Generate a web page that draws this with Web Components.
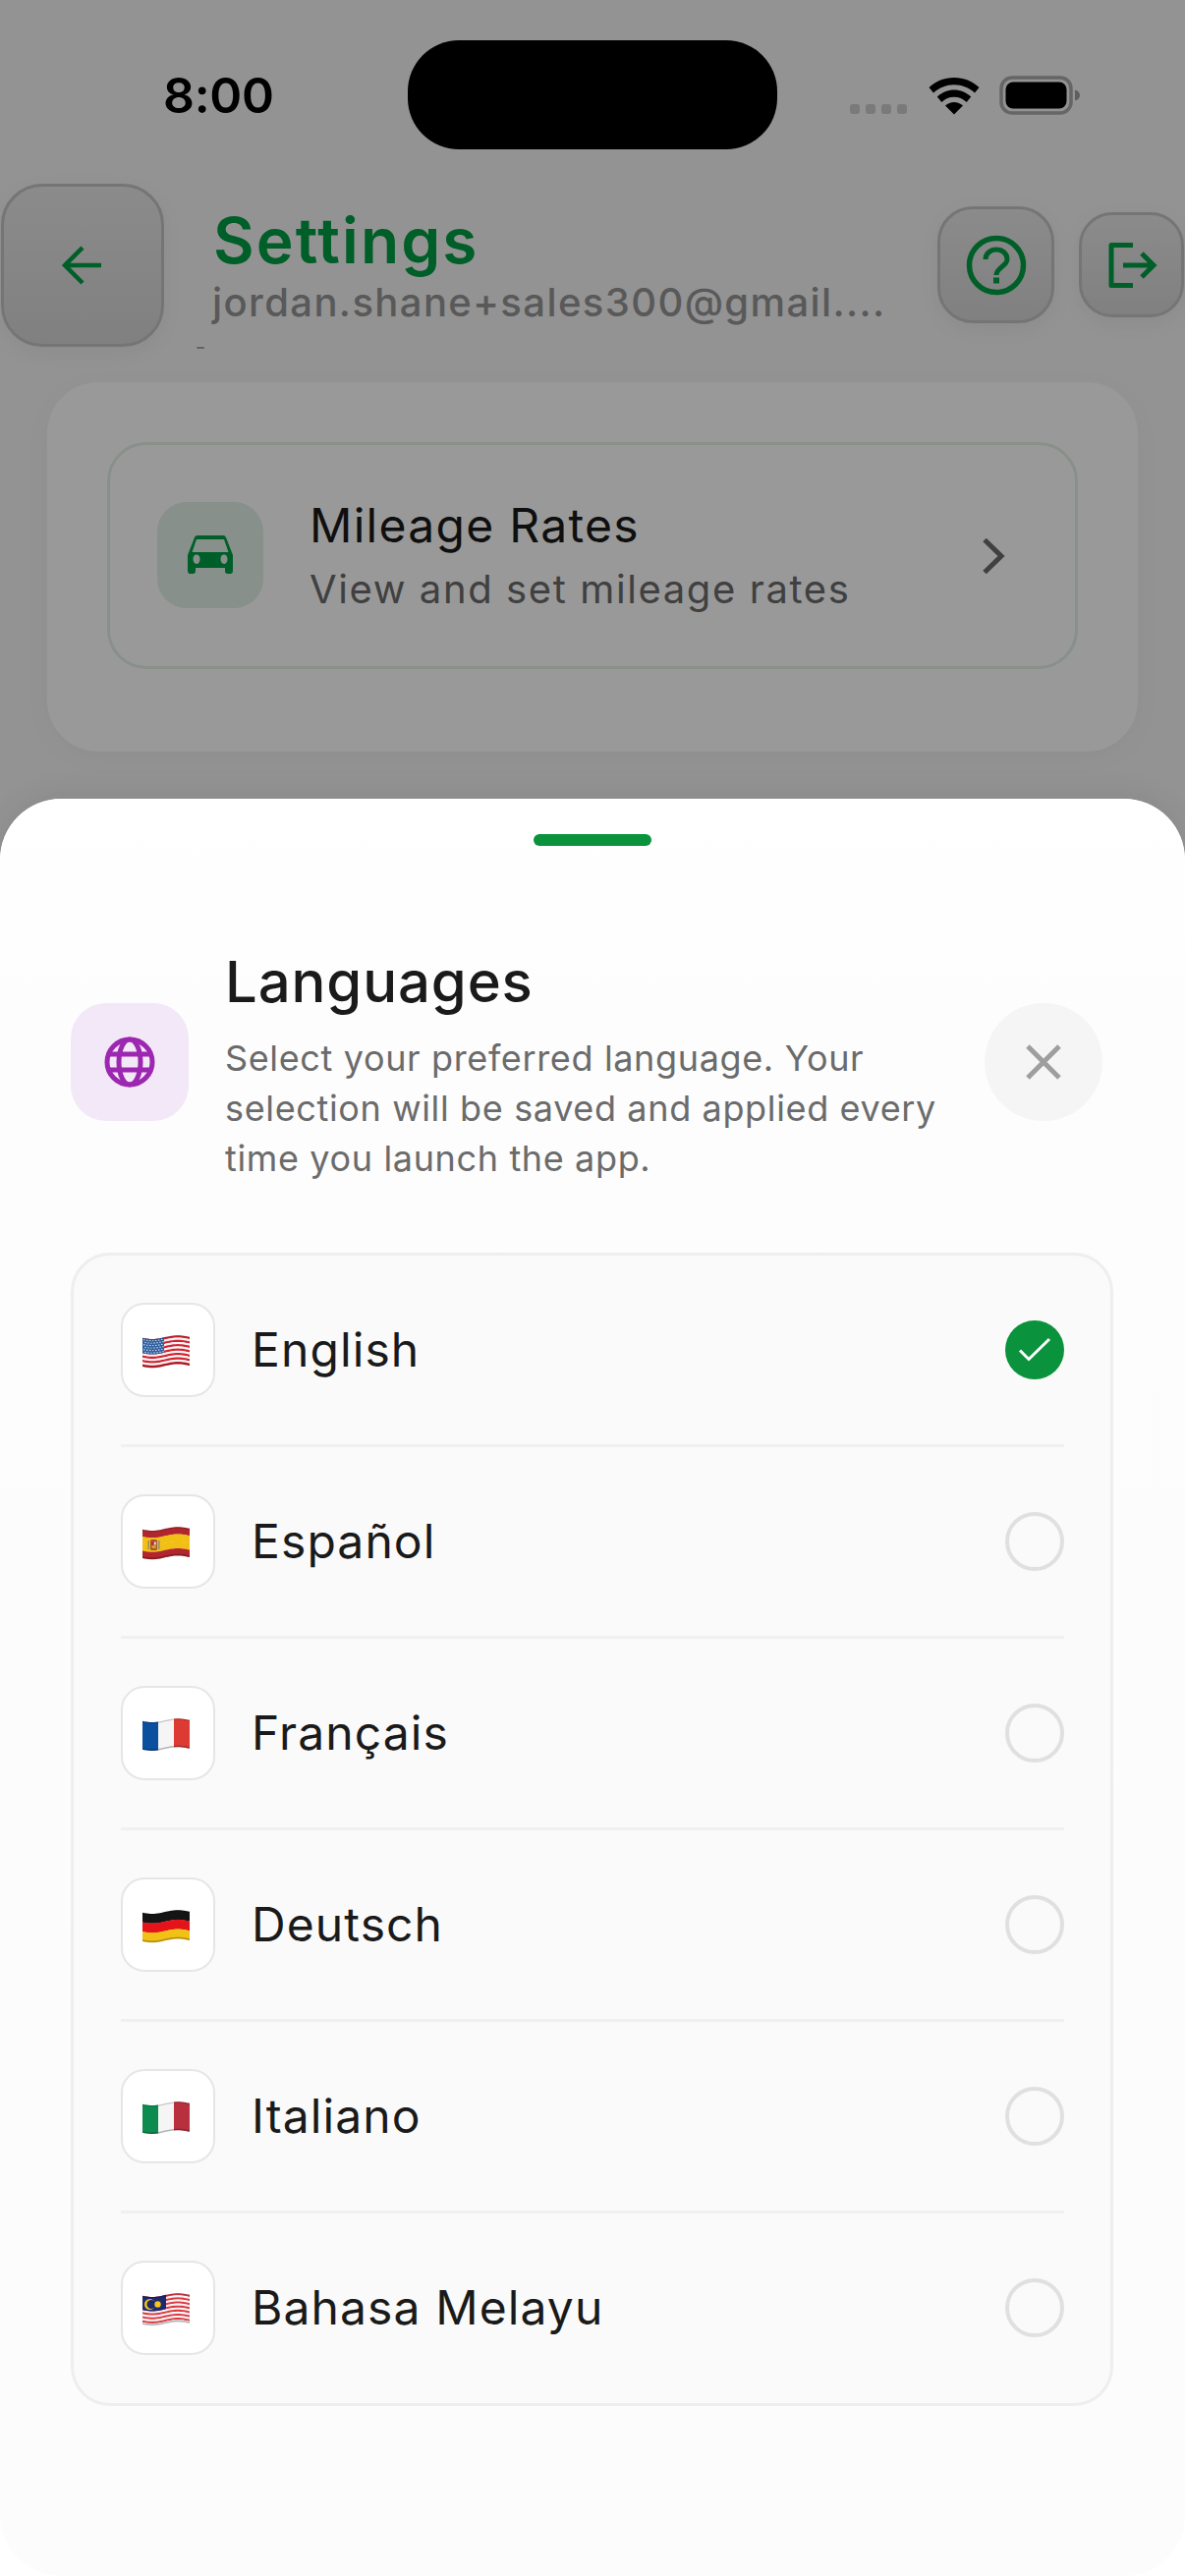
<!doctype html>
<html><head><meta charset="utf-8"><title>Settings</title>
<style>html,body{margin:0;padding:0;background:#f5f5f5}body{width:1206px;height:2622px;overflow:hidden;font-family:Inter,"Noto Sans",sans-serif}</style>
</head><body>
<app-root>
  <settings-screen slot="screen"></settings-screen>
  <status-bar slot="status"></status-bar>
  <bottom-sheet slot="sheet" heading="Languages" text="Select your preferred language. Your selection will be saved and applied every time you launch the app.">
    <language-row code="us" selected>English</language-row>
    <language-row code="es">Español</language-row>
    <language-row code="fr">Français</language-row>
    <language-row code="de">Deutsch</language-row>
    <language-row code="it">Italiano</language-row>
    <language-row code="my" last>Bahasa Melayu</language-row>
  </bottom-sheet>
</app-root>
<script>
function def(name, html, init){
  customElements.define(name, class extends HTMLElement{
    connectedCallback(){
      if(this.shadowRoot) return;
      const r=this.attachShadow({mode:'open'});
      r.innerHTML=typeof html==='function'?html(this):html;
      if(init) init(this,r);
    }
  });
}
def('app-root',`<style>
:host{display:block;position:relative;width:1206px;height:2622px;overflow:hidden;background:#f5f5f5}
.scrim{position:absolute;inset:0;background:rgba(0,0,0,.4)}
</style><slot name="screen"></slot><div class="scrim"></div><slot name="status"></slot><slot name="sheet"></slot>`);

def('status-bar',`<style>
:host{display:block;position:absolute;left:0;top:0;width:1206px;height:160px}
.bar{position:relative;width:100%;height:100%;display:grid;grid-template-columns:415px 376px 1fr;align-items:start}
.time{font:600 50px/1 Inter,sans-serif;color:#000;padding:72px 0 0 166px;letter-spacing:-.3px}
.island{margin-top:41px;height:111px;background:#000;border-radius:52px}
.right{display:flex;align-items:flex-start;padding:78px 0 0 74px;gap:0}
.dots{display:flex;gap:6px;margin-top:28px;width:80px}
.dots i{width:10px;height:10px;border-radius:3px;background:#7a7a7a}
svg{display:block}
</style><div class="bar"><div class="time">8:00</div><div class="island"></div><div class="right">
<div class="dots"><i></i><i></i><i></i><i></i></div>
<svg width="52" height="39" viewBox="0 0 52 39" style="margin-top:1px"><path fill="#000" d="M26 0C16 0 7.500 3.500 0.500 10L5 15.500C11 10.300 18 7.300 26 7.300S41 10.300 47 15.500L51.500 10C44.500 3.500 36 0 26 0Z"/><path fill="#000" d="M26 12.500C19.500 12.500 14 14.800 8.800 19.500L13.300 25C17 21.600 21 19.800 26 19.800S35 21.600 38.700 25L43.200 19.500C38 14.800 32.500 12.500 26 12.500Z"/><path fill="#000" d="M26 25C22.500 25 19.800 26.200 17 28.500L26 37.500L35 28.500C32.200 26.200 29.500 25 26 25Z"/></svg>
<svg width="86" height="40" viewBox="0 0 86 40" style="margin-left:20px;margin-top:-1px"><rect x="2" y="2" width="71" height="36" rx="11" fill="none" stroke="#666" stroke-width="3.500"/><rect x="6.500" y="6.500" width="62" height="27" rx="7.500" fill="#000"/><path d="M77 14.500c3 .5 5 2.800 5 5.500s-2 5-5 5.500z" fill="#5f5f5f"/></svg>
</div></div>`);

def('icon-btn',h=>{const s=h.getAttribute('size');return `<style>
:host{display:block;flex:none;width:${s}px;height:${s}px}
.b{box-sizing:border-box;width:100%;height:100%;display:flex;align-items:center;justify-content:center;border:3px solid #c4c4c4;border-radius:${h.getAttribute('r')}px;background:linear-gradient(#e8e8e8,#d6d6d6);box-shadow:0 6px 22px rgba(0,0,0,.05)}
</style><div class="b"><slot></slot></div>`});

def('settings-screen',`<style>
:host{display:block;box-sizing:border-box;width:1206px;height:2622px;padding-top:186px;background:#f5f5f5}
.hdr{display:flex;align-items:center;padding:0 1px;height:167px;position:relative}
.hdr::after{content:"";position:absolute;left:200px;top:167px;width:8px;height:2px;border-radius:1px;background:#a6a6a6}
.txt{flex:1;min-width:0;margin-left:50px;margin-top:-2px}
.t{font:600 64px/78px Inter,sans-serif;color:#009e44;white-space:nowrap;letter-spacing:2.100px}
.e{font:500 40px/46px Inter,sans-serif;color:#949494;white-space:nowrap;margin-left:-1px;margin-top:1px;letter-spacing:1.400px}
.gap{width:25px;flex:none}
svg{display:block}
.card{box-sizing:border-box;margin:36px 48px 0;height:376px;border-radius:52px;background:#fff;padding:61px 61px 0 61px;box-shadow:0 6px 30px rgba(0,0,0,.03)}
</style>
<div class="hdr">
<icon-btn size="166" r="42"><svg width="44" height="44" viewBox="0 0 44 44"><path d="M41 22H6M22 4L4 22l18 18" fill="none" stroke="#009e44" stroke-width="4.500"/></svg></icon-btn>
<div class="txt"><div class="t">Settings</div><div class="e">jordan.shane+sales300@gmail....</div></div>
<icon-btn size="119" r="36"><svg width="62" height="62" viewBox="0 0 62 62"><circle cx="31" cy="31" r="27.500" fill="none" stroke="#009e44" stroke-width="5.500"/><path d="M20 25c0-6 5-10 11-10s11 4 11 10c0 7-11 8-11 16" fill="none" stroke="#009e44" stroke-width="5"/><rect x="28" y="43.500" width="6" height="6" fill="#009e44"/></svg></icon-btn>
<div class="gap"></div>
<icon-btn size="107" r="34"><svg width="52" height="46" viewBox="0 0 52 46"><path d="M27 2.500H5V43.500H27" fill="none" stroke="#009e44" stroke-width="5" stroke-linejoin="round"/><path d="M17 23H47M36 11L48 23 36 35" fill="none" stroke="#009e44" stroke-width="5"/></svg></icon-btn>
</div>
<div class="card"><mileage-row></mileage-row></div>`);

def('mileage-row',`<style>
:host{display:block}
.r{box-sizing:border-box;height:231px;border:3px solid #e3f0e6;border-radius:40px;background:#fff;display:flex;align-items:center;padding:0 71px 0 48px}
.tile{width:108px;height:108px;border-radius:30px;background:#e1f1e7;display:flex;align-items:center;justify-content:center;flex:none;margin-right:47px;margin-top:-1px}
.c{flex:1;margin-top:-1px}
.t{font:400 48px/58px Inter,sans-serif;color:#1a1a1a;letter-spacing:1.300px}
.s{font:400 40px/48px Inter,sans-serif;color:#6b6b6b;letter-spacing:1.600px;margin-top:12px}
svg{display:block}
</style><div class="r"><div class="tile"><svg width="46" height="40" viewBox="0 0 46 40"><path fill="#009e44" fill-rule="evenodd" d="M39 2C38.600.8 37.400 0 36 0H10C8.600 0 7.400.8 7 2L0 20V36C0 37.700 1 39 2.500 39H5.500C7 39 8 37.700 8 36V33H38V36C38 37.700 39 39 40.500 39H43.500C45 39 46 37.700 46 36V20ZM9 4H37L41.500 17H4.500ZM9 29C6.800 29 5.500 26.800 5.500 24S6.800 19.500 9 19.500 12.500 21.500 12.500 24 11.200 29 9 29ZM37 29C34.800 29 33.500 26.800 33.500 24S34.800 19.500 37 19.500 40.500 21.500 40.500 24 39.200 29 37 29Z"/></svg></div>
<div class="c"><div class="t">Mileage Rates</div><div class="s">View and set mileage rates</div></div>
<svg width="24" height="36" viewBox="0 0 24 36"><path d="M3 1.500L20 18 3 34.500" fill="none" stroke="#6b6b6b" stroke-width="5"/></svg></div>`);

def('bottom-sheet',h=>`<style>
:host{display:block;position:absolute;left:0;top:813px;width:1206px;height:1809px;background:#fff;border-radius:62px 62px 0 0;overflow:hidden;box-shadow:0 -6px 30px rgba(0,0,0,.06)}
.panel{box-sizing:border-box;height:100%;background:linear-gradient(#fff,#fdfdfd 12%,#fcfcfc);border-radius:62px;padding:36px 72px 0}
.handle{width:120px;height:12px;border-radius:6px;background:#0a923c;margin:0 auto}
.head{display:flex;align-items:center;margin-top:88px;height:264px;padding-right:12px}
.globe{width:120px;height:120px;border-radius:36px;background:#f3e8f7;display:flex;align-items:center;justify-content:center;flex:none}
.txt{flex:1;margin:7px 24px 0 37px;min-width:0}
h2{margin:0 0 18px;font:500 58px/70px Inter,sans-serif;color:#1a1a1a;letter-spacing:.9px}
p{margin:0;font:400 36px/51px Inter,sans-serif;color:#6b6b6b;letter-spacing:.64px}
.close{width:120px;height:120px;border-radius:50%;background:#f5f5f5;display:flex;align-items:center;justify-content:center;flex:none}
.list{margin-top:62px;box-sizing:border-box;width:1061px;height:1174px;border:3px solid #eee;border-radius:40px;background:#fafafa;padding:0 47px 0 48px}
svg{display:block}
</style><div class="panel"><div class="handle"></div>
<div class="head"><div class="globe"><svg width="52" height="52" viewBox="0 0 52 52" fill="none" stroke="#9c27b0" stroke-width="5"><circle cx="26" cy="26" r="23"/><ellipse cx="26" cy="26" rx="11" ry="23"/><path d="M4 18H48M4 34H48"/></svg></div>
<div class="txt"><h2>${h.getAttribute('heading')}</h2><p>${h.getAttribute('text')}</p></div>
<div class="close"><svg width="36" height="36" viewBox="0 0 36 36"><path d="M2 2L34 34M34 2L2 34" stroke="#9e9e9e" stroke-width="5"/></svg></div></div>
<div class="list"><slot></slot></div></div>`);

def('language-row',h=>{
  const sel=h.hasAttribute('selected'),last=h.hasAttribute('last');
  return `<style>
:host{display:block}
.r{box-sizing:border-box;height:195px;display:flex;align-items:center;border-bottom:3px solid ${last?'transparent':'#f0f0f0'}}
.tile{box-sizing:border-box;width:96px;height:96px;border:2px solid #e6e6e6;border-radius:24px;background:#fff;display:flex;align-items:center;justify-content:center;flex:none;margin-right:37px}
.l{flex:1;font:400 48px/58px Inter,sans-serif;color:#1a1a1a;letter-spacing:1.100px}
.dot{box-sizing:border-box;width:60px;height:60px;border-radius:50%;flex:none;display:flex;align-items:center;justify-content:center;${sel?'background:#0a923c':'border:4px solid #e0e0e0'}}
svg{display:block}
</style><div class="r"><div class="tile"><flag-icon code="${h.getAttribute('code')}"></flag-icon></div><div class="l"><slot></slot></div><div class="dot">${sel?'<svg width="36" height="26" viewBox="0 0 36 26"><path d="M3 13.500L12 22.500 33 2" fill="none" stroke="#fff" stroke-width="3"/></svg>':''}</div></div>`});

function wave(x){return 2.1+1.9*Math.cos(Math.PI*(x-10)/26)}
function band(x0,x1,y,h,c,extra){
  let t=[],b=[];
  for(let x=x0;x<=x1+.001;x+=2){const v=wave(x);t.push(x+','+(v+y).toFixed(2));b.unshift(x+','+(v+y+h).toFixed(2));}
  return `<polygon points="${t.concat(b).join(' ')}" fill="${c}"${extra||''}/>`;
}
function flag(code){
  const H=29;let s='';
  const hs=(cols)=>{const h=H/cols.length;cols.forEach((c,i)=>s+=band(0,48,i*h,h+.2,c))};
  const vs=(cols)=>{const w=48/cols.length;cols.forEach((c,i)=>s+=band(i*w,(i+1)*w,0,H,c))};
  if(code==='us'){
    const a=[];for(let i=0;i<13;i++)a.push(i%2?'#f4f4f4':'#d3222f');hs(a);
    s+=band(0,22,0,15.6,'#2f5f9e');
    for(let r=0;r<6;r++)for(let c=0;c<7;c++){const x=1.8+c*3+(r%2?1.2:0);s+=`<circle cx="${x}" cy="${(wave(x)+1.6+r*2.5).toFixed(2)}" r=".7" fill="#e8eef8"/>`;}
  }else if(code==='es'){
    hs(['#b1262e','#f2c014','#f2c014','#b1262e']);
    s+=`<rect x="8" y="${wave(11)+9}" width="7" height="11" rx="1.500" fill="#a8552e"/><rect x="9.500" y="${wave(11)+11.500}" width="2" height="3" fill="#c8202a"/><rect x="11.800" y="${wave(11)+11.500}" width="2" height="3" fill="#dcdcdc"/><rect x="9.500" y="${wave(11)+15}" width="4.300" height="3" fill="#d2a020"/><rect x="5.500" y="${wave(11)+10}" width="1.500" height="9" fill="#9a8a70"/><rect x="16" y="${wave(11)+10}" width="1.500" height="9" fill="#9a8a70"/>`;
  }else if(code==='fr'){vs(['#0b4f9f','#f5f5f5','#dc3a33']);}
  else if(code==='de'){hs(['#141414','#e5141b','#f1c116']);}
  else if(code==='it'){vs(['#0e8c50','#f5f5f5','#b8303e']);}
  else if(code==='my'){
    const a=[];for(let i=0;i<14;i++)a.push(i%2?'#f6f6f6':'#de3a44');hs(a);
    s+=band(0,24,0,14.5,'#1c2a6e');
    const y=wave(9)+7.500;
    s+=`<circle cx="7.500" cy="${y}" r="5.500" fill="#f5c518"/><circle cx="9" cy="${y}" r="4.500" fill="#1c2a6e"/><circle cx="15.500" cy="${y}" r="3.200" fill="#f5c518"/>`;
  }
  s+=band(0,48,0,1.2,'rgba(0,0,0,.2)')+band(0,48,H-1.5,1.5,'rgba(0,0,0,.28)');
  return s;
}
def('flag-icon',h=>`<style>:host{display:block;margin:3px 5px 0 0}svg{display:block}</style><svg width="48" height="34" viewBox="0 0 48 34">${flag(h.getAttribute('code'))}</svg>`);
</script>
</body></html>
